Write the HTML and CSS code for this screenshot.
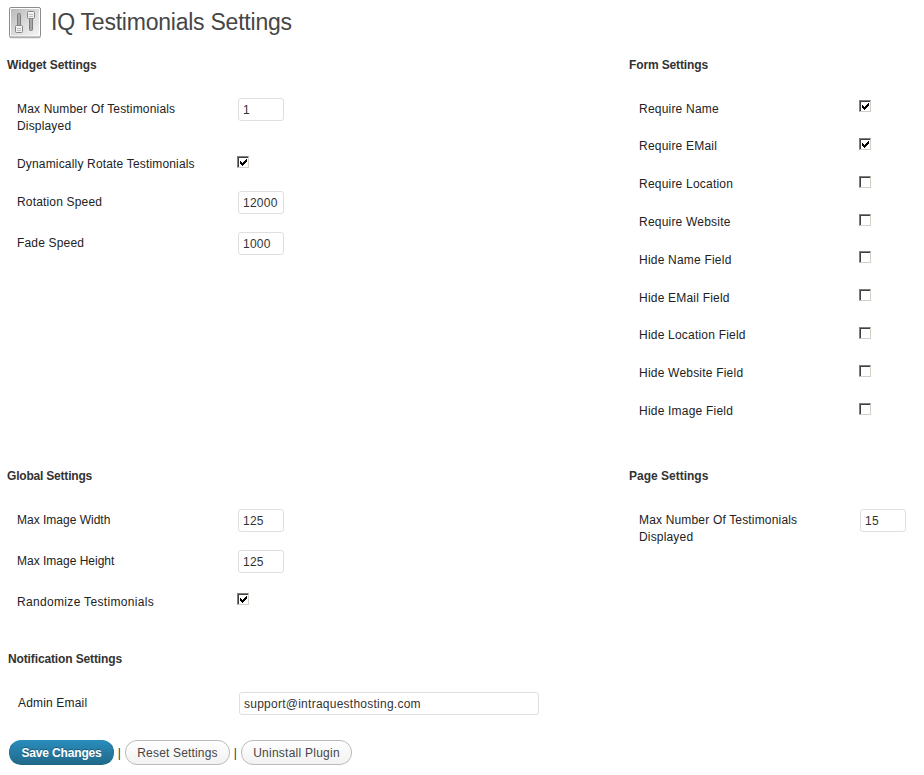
FILE: index.html
```
<!DOCTYPE html>
<html lang="en">
<head>
<meta charset="utf-8">
<title>IQ Testimonials Settings</title>
<link rel="stylesheet" href="styles.css">
</head>
<body>
<header class="page-header">
  <svg class="page-icon" width="34" height="34" viewBox="0 0 34 34">
    <defs>
      <linearGradient id="plate" x1="0" y1="0" x2="1" y2="1"><stop offset="0" stop-color="#b8b8b8"/><stop offset=".55" stop-color="#dedede"/><stop offset="1" stop-color="#f4f4f4"/></linearGradient>
    </defs>
    <rect x="1" y="2" width="32" height="30.5" rx="2" fill="#d4d4d4"/>
    <rect x="1.5" y="1.5" width="31" height="29.5" rx="1.5" fill="#fff" stroke="#8c8c8c"/>
    <rect x="3" y="3" width="28" height="26.5" fill="url(#plate)"/>
    <rect x="9.5" y="7.5" width="3" height="14" rx="1" fill="#a8a8a8" stroke="#7c7c7c"/>
    <rect x="21.5" y="11.5" width="3" height="13" rx="1" fill="#a8a8a8" stroke="#7c7c7c"/>
    <rect x="7.5" y="19.5" width="7" height="7" rx="1" fill="#f2f2f2" stroke="#858585"/>
    <path d="M9 22.500h4M9 24.500h4" stroke="#bdbdbd"/>
    <rect x="19.500" y="5.500" width="7" height="7" rx="1" fill="#f2f2f2" stroke="#858585"/>
    <path d="M21 8.500h4M21 10.500h4" stroke="#bdbdbd"/>
  </svg>
  <h1>IQ Testimonials Settings</h1>
</header>
<form>
  <div class="sections">
    <section class="widget">
      <h2>Widget Settings</h2>
      <div class="row two-line"><label for="wmax">Max Number Of Testimonials Displayed</label><input id="wmax" type="text" value="1"></div>
      <div class="row check"><label for="rotate">Dynamically Rotate Testimonials</label><input id="rotate" type="checkbox" checked></div>
      <div class="row"><label for="rspeed">Rotation Speed</label><input id="rspeed" type="text" value="12000"></div>
      <div class="row"><label for="fspeed">Fade Speed</label><input id="fspeed" type="text" value="1000"></div>
    </section>
    <section class="fields">
      <h2>Form Settings</h2>
      <div class="row check"><label for="f1">Require Name</label><input id="f1" type="checkbox" checked></div>
      <div class="row check"><label for="f2">Require EMail</label><input id="f2" type="checkbox" checked></div>
      <div class="row check"><label for="f3">Require Location</label><input id="f3" type="checkbox"></div>
      <div class="row check"><label for="f4">Require Website</label><input id="f4" type="checkbox"></div>
      <div class="row check"><label for="f5">Hide Name Field</label><input id="f5" type="checkbox"></div>
      <div class="row check"><label for="f6">Hide EMail Field</label><input id="f6" type="checkbox"></div>
      <div class="row check"><label for="f7">Hide Location Field</label><input id="f7" type="checkbox"></div>
      <div class="row check"><label for="f8">Hide Website Field</label><input id="f8" type="checkbox"></div>
      <div class="row check"><label for="f9">Hide Image Field</label><input id="f9" type="checkbox"></div>
    </section>
    <section class="global">
      <h2>Global Settings</h2>
      <div class="row"><label class="tight" for="iw">Max Image Width</label><input id="iw" type="text" value="125"></div>
      <div class="row"><label class="tight" for="ih">Max Image Height</label><input id="ih" type="text" value="125"></div>
      <div class="row check"><label class="loose" for="rand">Randomize Testimonials</label><input id="rand" type="checkbox" checked></div>
    </section>
    <section class="page">
      <h2>Page Settings</h2>
      <div class="row two-line"><label for="pmax">Max Number Of Testimonials Displayed</label><input id="pmax" type="text" value="15"></div>
    </section>
  </div>
  <section class="notification">
    <h2>Notification Settings</h2>
    <div class="row"><label for="email">Admin Email</label><input id="email" class="wide" type="text" value="support@intraquesthosting.com"></div>
  </section>
  <div class="actions">
    <button class="save" type="button">Save Changes</button>
    <span class="sep">|</span>
    <button class="reset" type="button">Reset Settings</button>
    <span class="sep">|</span>
    <button class="uninstall" type="button">Uninstall Plugin</button>
  </div>
</form>
</body>
</html>
```
FILE: styles.css
```
* { box-sizing: border-box; }
body {
  margin: 0;
  background: #fff;
  color: #333;
  font: 12px/17px "Liberation Sans", Arial, sans-serif;
  letter-spacing: 0.17px;
}
.page-header {
  display: flex;
  height: 56px;
  padding: 6px 0 0 8px;
}
.page-icon { flex: none; }
h1 {
  margin: 1px 0 0 9px;
  font-size: 23px;
  font-weight: 400;
  line-height: 30px;
  letter-spacing: -0.23px;
  color: #464646;
}
h2 {
  margin: 0 0 16px;
  padding-top: 1px;
  height: 18px;
  font-size: 12px;
  line-height: 17px;
  letter-spacing: -0.13px;
}
.widget h2 { letter-spacing: -0.06px; }
.global h2 { letter-spacing: -0.2px; }
.page h2 { letter-spacing: 0; }
.sections {
  display: grid;
  grid-template-columns: 622px 295px;
  grid-template-rows: 411px 183px;
  padding-left: 7px;
}
.row {
  display: grid;
  grid-template-columns: 221px auto;
  justify-content: start;
  align-items: start;
  height: 41px;
  padding: 8px 0 0 10px;
}
.row.check { height: 38px; }
.row.two-line { height: 55px; }
label {
  width: 180px;
  padding-top: 3px;
  color: #222;
}
label.tight { letter-spacing: 0; }
label.loose { letter-spacing: 0.33px; }
.fields label { letter-spacing: 0.21px; }
.fields .row:nth-of-type(4) { height: 37px; }
.fields .row:nth-of-type(n+2):nth-of-type(-n+4) label,
.fields .row:nth-of-type(n+7) label { padding-top: 2px; }
input { margin: 0; }
input[type="text"] {
  width: 46px;
  height: 23px;
  padding: 1px 4px 0;
  border: 1px solid #dfdfdf;
  border-radius: 3px;
  background: #fff;
  color: #333;
  font: inherit;
  letter-spacing: 0.25px;
}
input[type="checkbox"] {
  appearance: none;
  width: 12px;
  height: 12px;
  margin: 2px 0 0 -1px;
  border: 1px solid;
  border-color: #808080 #d4d0c8 #d4d0c8 #808080;
  background: #fff;
  box-shadow: inset 1px 1px #404040;
}
.widget input[type="checkbox"] { margin-top: 3px; }
input[type="checkbox"]:checked::before {
  content: "";
  display: block;
  width: 7px;
  height: 7px;
  margin: 2px 0 0 2px;
  background: #000;
  clip-path: polygon(0 2px, 1px 2px, 1px 3px, 2px 3px, 2px 4px, 3px 4px, 3px 3px, 4px 3px, 4px 2px, 5px 2px, 5px 1px, 6px 1px, 6px 0, 7px 0, 7px 3px, 6px 3px, 6px 4px, 5px 4px, 5px 5px, 4px 5px, 4px 6px, 3px 6px, 3px 7px, 2px 7px, 2px 6px, 1px 6px, 1px 5px, 0 5px);
}
input[type="text"].wide { width: 300px; }
.notification { padding-left: 8px; height: 90px; }
.actions {
  display: flex;
  padding-left: 9px;
}
button {
  height: 25px;
  padding: 1px 0 0;
  border: 1px solid #bbb;
  border-radius: 12px;
  background: linear-gradient(#fff, #f2f2f2);
  color: #464646;
  font: 12px/15px "Liberation Sans", Arial, sans-serif;
  letter-spacing: 0.17px;
}
.save {
  width: 105px;
  border-color: #298cba #21759b #1c6585 #21759b;
  background: linear-gradient(#298cba, #21698a);
  color: #fff;
  font-weight: 700;
  letter-spacing: -0.15px;
  text-shadow: 0 -1px 0 rgba(0, 0, 0, 0.3);
}
.reset { width: 105px; }
.uninstall { width: 111px; letter-spacing: 0.25px; }
.sep { width: 11px; padding-top: 5px; text-align: center; }
```
